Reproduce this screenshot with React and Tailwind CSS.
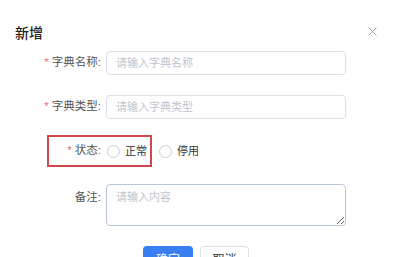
import { X } from 'lucide-react';

const font = { fontFamily: '"Liberation Sans", "Noto Sans CJK SC", sans-serif' };

const Label = ({ required, children }) => (
    <div className="w-[106px] shrink-0 pr-[5px] text-right text-[11.5px] text-[#555]">
        {required && <span className="mr-[3px] text-[#e0707a]">*</span>}
        {children}
    </div>
);

const Radio = ({ label }) => (
    <label className="flex items-center gap-[5px] text-[11px] text-[#333]">
        <span className="h-[13px] w-[13px] rounded-full border border-[#c8ccd3] bg-white"></span>
        {label}
    </label>
);

export default function App() {
    return (
        <div className="relative h-[257px] w-[402px] overflow-hidden bg-white" style={font}>
            {/* Header */}
            <div className="mt-[19px] flex h-[28px] items-center justify-between pl-[15px] pr-[22px]">
                <span className="text-[14px] font-medium text-[#222]">新增</span>
                <X className="mb-[4px] h-[15px] w-[15px] text-[#888]" strokeWidth={1.2} />
            </div>

            {/* Form */}
            <div className="flex flex-col">
                <div className="mt-[4px] flex items-center">
                    <Label required>字典名称:</Label>
                    <input
                        className="h-[24px] w-[240px] rounded-[4px] border border-[#dcdfe6] px-[9px] text-[11px] outline-none placeholder:text-[#c0c4cc]"
                        placeholder="请输入字典名称"
                    />
                </div>
                <div className="mt-[20px] flex items-center">
                    <Label required>字典类型:</Label>
                    <input
                        className="h-[24px] w-[240px] rounded-[4px] border border-[#dcdfe6] px-[9px] text-[11px] outline-none placeholder:text-[#c0c4cc]"
                        placeholder="请输入字典类型"
                    />
                </div>
                <div className="relative mt-[16px] flex h-[32px] items-center">
                    <Label required>状态:</Label>
                    <div className="flex items-center gap-[12px] pl-[1px]">
                        <Radio label="正常" />
                        <Radio label="停用" />
                    </div>
                    {/* Highlight annotation */}
                    <div className="pointer-events-none absolute left-[47px] top-0 h-[32px] w-[105px] border-2 border-[#d1474e]"></div>
                </div>
                <div className="mt-[17px] flex items-start">
                    <div className="pt-[5px]">
                        <Label>备注:</Label>
                    </div>
                    <textarea
                        className="h-[42px] w-[240px] resize-y rounded-[4px] border border-[#b9c6d6] px-[9px] py-[4px] text-[11px] outline-none placeholder:text-[#c0c4cc]"
                        placeholder="请输入内容"
                    />
                </div>
                <div className="mt-[20px] flex gap-[7px] pl-[143px]">
                    <button className="h-[28px] w-[50px] rounded-[4px] bg-[#3a7ff2] text-[12px] text-white">确定</button>
                    <button className="h-[28px] w-[49px] rounded-[4px] border border-[#dcdfe6] bg-white text-[12px] text-[#333]">取消</button>
                </div>
            </div>
        </div>
    );
}
